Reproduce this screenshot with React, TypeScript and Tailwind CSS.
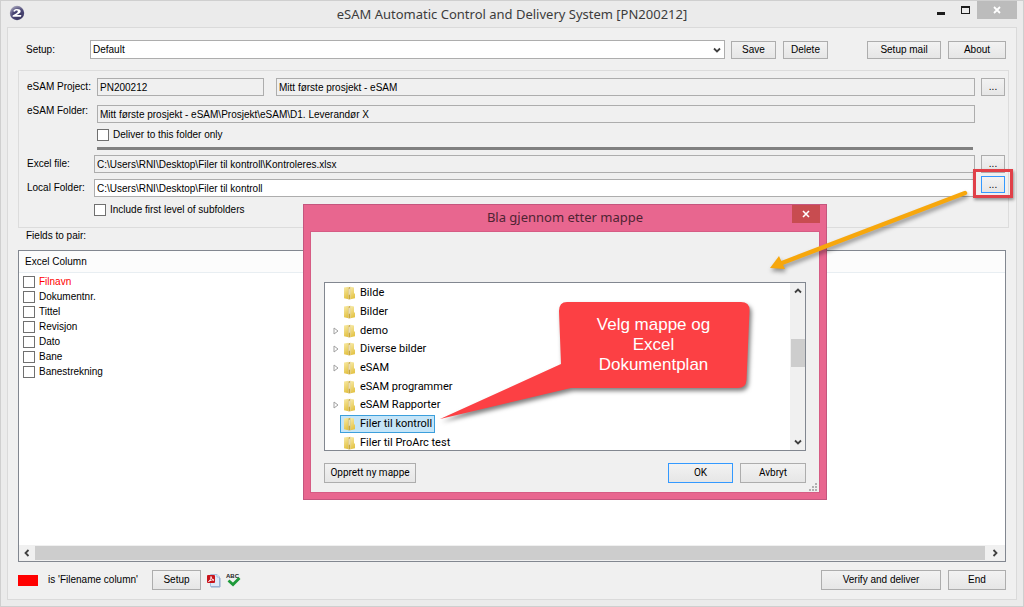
import React from 'react';
import clsx from 'clsx';

const excelColumns = [
  { name: 'Filnavn', isFilename: true },
  { name: 'Dokumentnr.' },
  { name: 'Tittel' },
  { name: 'Revisjon' },
  { name: 'Dato' },
  { name: 'Bane' },
  { name: 'Banestrekning' },
];

const folders = [
  { name: 'Bilde' },
  { name: 'Bilder' },
  { name: 'demo', expandable: true },
  { name: 'Diverse bilder', expandable: true },
  { name: 'eSAM', expandable: true },
  { name: 'eSAM programmer' },
  { name: 'eSAM Rapporter', expandable: true },
  { name: 'Filer til kontroll', selected: true },
  { name: 'Filer til ProArc test' },
];

type ButtonProps = React.ButtonHTMLAttributes<HTMLButtonElement>;

function Button({ className, ...props }: ButtonProps) {
  return (
    <button
      type="button"
      className={clsx(
        'shrink-0 border bg-linear-to-b from-[#f2f2f2] to-[#e6e6e6] text-center whitespace-nowrap',
        className
      )}
      {...props}
    />
  );
}

function BrowseButton({ className, ...props }: ButtonProps) {
  return (
    <Button className={clsx('w-6 leading-4', className)} {...props}>
      ...
    </Button>
  );
}

interface TextFieldProps {
  id: string;
  value: string;
  label?: string;
  className?: string;
}

function TextField({ id, value, label, className }: TextFieldProps) {
  return (
    <input
      id={id}
      type="text"
      aria-label={label}
      defaultValue={value}
      className={clsx('h-[18px] min-w-0 border border-[#adadad] px-0.5 outline-none', className)}
    />
  );
}

function CheckBox({ id, label, className }: { id: string; label: string; className?: string }) {
  return (
    <div className={clsx('flex items-center', className)}>
      <input
        id={id}
        type="checkbox"
        className="size-3 shrink-0 appearance-none border border-[#707070] bg-white"
      />
      <label htmlFor={id} className="whitespace-nowrap pl-1">
        {label}
      </label>
    </div>
  );
}

function Chevron({ d }: { d: string }) {
  return (
    <svg viewBox="0 0 8 8" className="size-2" fill="none" stroke="#404040" strokeWidth="1.8">
      <path d={d} />
    </svg>
  );
}

const chevronUp = 'M1 5.5 4 2.5 7 5.5';
const chevronDown = 'M1 2.5 4 5.5 7 2.5';
const chevronLeft = 'M5.5 1 2.5 4 5.5 7';
const chevronRight = 'M2.5 1 5.5 4 2.5 7';

function AppLogo() {
  return (
    <svg viewBox="0 0 16 16" className="size-4">
      <defs>
        <radialGradient id="logo-fill" cx="0.65" cy="0.75" r="0.8">
          <stop offset="0" stopColor="#3a3660" />
          <stop offset="0.6" stopColor="#4a4674" />
          <stop offset="1" stopColor="#a9a7bd" />
        </radialGradient>
      </defs>
      <circle cx="8" cy="8" r="7.2" fill="url(#logo-fill)" />
      <path
        d="M4.2 6.3C4.8 4.6 6.3 4 8.2 4c2.1 0 3.5.8 3.5 2.2 0 1.700-2.100 2.500-4.200 3.900h4.900l-.5 1.600H3.600v-1.200c2.300-1.700 5.200-2.600 5.200-4.100 0-.6-.5-.9-1.200-.9-.9 0-1.400.4-1.600 1.200z"
        fill="#fff"
      />
    </svg>
  );
}

function FolderIcon() {
  return (
    <svg viewBox="0 0 13 14" className="h-3.5 w-[13px] shrink-0">
      <defs>
        <linearGradient id="folder-fill" x1="0" y1="0" x2="0.3" y2="1">
          <stop offset="0" stopColor="#f8eba8" />
          <stop offset="1" stopColor="#e4c449" />
        </linearGradient>
      </defs>
      <path d="M1 1.500 5.500.8V13.200L1 12.300z" fill="url(#folder-fill)" />
      <path d="M5.500 1.500 7.500.8v12.400l-2 .3z" fill="#c9a840" />
      <path d="M5.800 3 6.800 2.600v6l-1 .4z" fill="#f2ead0" />
      <path d="M7.500.8 11 1.500V7l1 1v4.300l-4.500 1z" fill="url(#folder-fill)" />
    </svg>
  );
}

function PdfIcon() {
  return (
    <svg viewBox="0 0 14 16" className="h-4 w-3.5">
      <path d="M3.500 2.500H10l2.500 2.500v9.500h-9z" fill="#dce8f8" stroke="#a5bcdc" />
      <path d="M10 2.500V5h2.500" fill="#fff" stroke="#a5bcdc" />
      <path d="M4 15h9V6" fill="none" stroke="#8fa8cc" />
      <rect x="0" y="3" width="8" height="8" rx="1" fill="#c8141c" />
      <path
        d="M1.500 9.500C3 8.800 4.300 6.500 4 4.500c.2 2 1.400 3.300 3 3.600-1.800-.3-3.600.2-5.500 1.400z"
        fill="none"
        stroke="#fff"
        strokeWidth=".9"
      />
    </svg>
  );
}

function SpellCheckIcon() {
  return (
    <svg viewBox="0 0 14 14" className="h-3.5 w-3.5 overflow-visible">
      <text
        x="-1"
        y="5"
        fontFamily="Liberation Sans, sans-serif"
        fontSize="6"
        fontWeight="bold"
        fill="#222"
      >
        ABC
      </text>
      <path d="M1.500 7.500 6 11.500 12.500 5" fill="none" stroke="#1e9a3a" strokeWidth="2.800" />
    </svg>
  );
}

function TitleBar() {
  return (
    <header className="flex h-[26px] items-start pl-0.5">
      <div className="w-[86px] pt-1">
        <AppLogo />
      </div>
      <h1 className="flex-1 pt-1 text-center font-['Noto_Sans'] text-[13px] leading-[18px] text-[#3c3c3c]">
        eSAM Automatic Control and Delivery System [PN200212]
      </h1>
      <div className="flex h-[18px]">
        <button type="button" aria-label="Minimize" className="flex w-6 items-end justify-center pb-1">
          <span className="h-[3px] w-2 bg-[#1c1c1c]" />
        </button>
        <button type="button" aria-label="Maximize" className="flex w-6 items-center justify-center">
          <span className="h-2 w-[9px] border border-t-2 border-[#1c1c1c]" />
        </button>
        <button
          type="button"
          aria-label="Close"
          className="flex w-10 items-center justify-center bg-[#bcbcbc]"
        >
          <svg viewBox="0 0 8 8" className="size-2" stroke="#fff" strokeWidth="1.8">
            <path d="M1 1l6 6M7 1 1 7" />
          </svg>
        </button>
      </div>
    </header>
  );
}

function SetupRow() {
  return (
    <div className="flex items-center pr-[3px] pl-2">
      <label htmlFor="setup" className="w-16 shrink-0">
        Setup:
      </label>
      <div className="grid h-[19px] min-w-0 flex-1 items-center">
        <select
          id="setup"
          className="col-start-1 row-start-1 h-[19px] w-full appearance-none border border-[#adadad] bg-white px-0.5 outline-none"
        >
          <option>Default</option>
        </select>
        <span className="pointer-events-none col-start-1 row-start-1 justify-self-end pr-1">
          <Chevron d={chevronDown} />
        </span>
      </div>
      <Button className="ml-1.5 h-[18px] w-[45px] border-[#adadad]">Save</Button>
      <Button className="ml-[7px] h-[18px] w-[45px] border-[#adadad]">Delete</Button>
      <Button className="ml-[39px] h-[18px] w-[74px] border-[#adadad]">Setup mail</Button>
      <Button className="ml-[7px] h-[18px] w-[58px] border-[#adadad]">About</Button>
    </div>
  );
}

function ProjectBox() {
  return (
    <section className="mt-[11px] border border-[#dcdcdc] pt-[7px] pr-[3px] pb-[11px] pl-2">
      <div className="flex items-center">
        <label htmlFor="project" className="w-[70px] shrink-0 whitespace-nowrap">
          eSAM Project:
        </label>
        <TextField id="project" value="PN200212" className="w-[167px]" />
        <TextField
          id="project-name"
          label="Project name"
          value="Mitt første prosjekt - eSAM"
          className="ml-3 flex-1"
        />
        <BrowseButton aria-label="Browse projects" className="ml-1.5 h-[18px] border-[#adadad]" />
      </div>

      <div className="mt-[9px] flex items-start pr-[30px]">
        <label htmlFor="esam-folder" className="w-[70px] shrink-0 leading-3 whitespace-nowrap">
          eSAM Folder:
        </label>
        <TextField
          id="esam-folder"
          value="Mitt første prosjekt - eSAM\Prosjekt\eSAM\D1. Leverandør X"
          className="flex-1"
        />
      </div>

      <CheckBox
        id="deliver-only"
        label="Deliver to this folder only"
        className="mt-[5px] h-[13px] pl-[70px]"
      />
      <div className="mt-1.5 mr-8 ml-[70px] h-[3px] bg-[#808080]" />

      <div className="mt-[5px] flex items-center">
        <label htmlFor="excel-file" className="w-[67px] shrink-0">
          Excel file:
        </label>
        <TextField
          id="excel-file"
          value="C:\Users\RNI\Desktop\Filer til kontroll\Kontroleres.xlsx"
          className="flex-1"
        />
        <BrowseButton aria-label="Browse Excel file" className="ml-1.5 h-[18px] border-[#adadad]" />
      </div>

      <div className="mt-1.5 flex items-center">
        <label htmlFor="local-folder" className="w-[67px] shrink-0 whitespace-nowrap">
          Local Folder:
        </label>
        <TextField
          id="local-folder"
          value="C:\Users\RNI\Desktop\Filer til kontroll"
          className="flex-1 bg-white"
        />
        <div className="relative ml-1.5 flex h-[18px] items-start">
          <BrowseButton
            aria-label="Browse local folder"
            className="-mt-[3px] h-[17px] border-[#3399ff]"
          />
          <span className="pointer-events-none absolute -inset-x-2 -top-2.5 -bottom-px border-3 border-[#e04048] shadow-[1px_2px_3px_rgba(0,0,0,0.4)]" />
        </div>
      </div>

      <CheckBox
        id="subfolders"
        label="Include first level of subfolders"
        className="mt-1.5 h-[13px] pl-[67px]"
      />
    </section>
  );
}

function ColumnList() {
  return (
    <section className="mr-[3px] flex flex-1 flex-col border border-[#828790] bg-white">
      <h2 className="h-[22px] border-b border-[#e8eef2] bg-[#fcfcfc] pl-1.5 leading-[22px]">
        Excel Column
      </h2>
      <ul className="flex-1 pt-px pl-1">
        {excelColumns.map((column) => (
          <li key={column.name} className={clsx(column.isFilename && 'text-[#ff0000]')}>
            <CheckBox id={`column-${column.name}`} label={column.name} className="h-[15px]" />
          </li>
        ))}
      </ul>
      <div className="flex h-4 items-center bg-[#f0f0f0]">
        <span className="flex w-4 justify-center">
          <Chevron d={chevronLeft} />
        </span>
        <span className="h-3.5 flex-1 bg-[#cdcdcd]" />
        <span className="flex w-5 justify-center">
          <Chevron d={chevronRight} />
        </span>
      </div>
    </section>
  );
}

function Footer() {
  return (
    <footer className="mt-2 flex items-center pr-[3px]">
      <span className="h-[11px] w-5 bg-[#ff0000]" />
      <span className="w-[114px] pl-2.5 whitespace-nowrap">is 'Filename column'</span>
      <Button className="h-5 w-[49px] border-[#adadad]">Setup</Button>
      <button type="button" aria-label="PDF" className="ml-1.5">
        <PdfIcon />
      </button>
      <button type="button" aria-label="Spell check" className="ml-1.5">
        <SpellCheckIcon />
      </button>
      <Button className="ml-auto h-5 w-[120px] border-[#adadad]">Verify and deliver</Button>
      <Button className="ml-[7px] h-5 w-[58px] border-[#adadad]">End</Button>
    </footer>
  );
}

function FolderTree() {
  return (
    <div className="flex h-[169px] border border-[#828790] bg-white">
      <ul className="-mb-0.5 flex flex-1 flex-col pt-px text-[11px]">
        {folders.map((folder) => (
          <li key={folder.name} className="flex flex-1 items-center pl-2">
            <span className="w-[7px]">
              {folder.expandable && (
                <svg viewBox="0 0 6 8" className="h-2 w-1.5" fill="#fff" stroke="#a0a0a0">
                  <path d="M1 1v6l4-3z" />
                </svg>
              )}
            </span>
            <span
              className={clsx(
                'flex h-full items-center gap-1 border px-0.5 whitespace-nowrap',
                folder.selected ? 'border-[#3c9fdc] bg-[#c5e5f8]' : 'border-transparent'
              )}
            >
              <FolderIcon />
              {folder.name}
            </span>
          </li>
        ))}
      </ul>
      <div className="flex w-[15px] flex-col items-center bg-[#f0f0f0] py-1">
        <Chevron d={chevronUp} />
        <span className="mt-11 h-7 w-3.5 bg-[#cdcdcd]" />
        <span className="mt-auto">
          <Chevron d={chevronDown} />
        </span>
      </div>
    </div>
  );
}

function FolderDialog() {
  return (
    <div
      role="dialog"
      aria-labelledby="dialog-title"
      className="absolute top-[203px] left-[302px] w-[524px] border border-[#c4567e] bg-[#e8668f] px-1.5 pb-1.5 font-[Roboto] text-[10px] text-black"
    >
      <div className="flex h-[26px] items-start">
        <h2
          id="dialog-title"
          className="flex-1 pl-7 text-center font-['Noto_Sans'] text-[13px] leading-[25px] text-[#4e2433]"
        >
          Bla gjennom etter mappe
        </h2>
        <button
          type="button"
          aria-label="Close"
          className="flex h-[18px] w-7 items-center justify-center bg-[#c84c50]"
        >
          <svg viewBox="0 0 8 8" className="size-2" stroke="#fff" strokeWidth="1.6">
            <path d="M1 1l6 6M7 1 1 7" />
          </svg>
        </button>
      </div>
      <div className="border border-[#d65c84] bg-[#f0f0f0] px-[13px] pt-[50px]">
        <FolderTree />
        <div className="mt-3 flex">
          <Button className="h-5 w-[92px] border-[#adadad]">Opprett ny mappe</Button>
          <Button className="ml-auto h-5 w-[65px] border-[#3399ff]">OK</Button>
          <Button className="ml-[7px] h-5 w-[66px] border-[#adadad]">Avbryt</Button>
        </div>
        <div className="-mr-3 flex h-[9px] justify-end">
          <svg viewBox="0 0 9 9" className="size-[9px]" fill="#b0b0b0">
            <path d="M6 0h2v2H6zM3 3h2v2H3zM6 3h2v2H6zM0 6h2v2H0zM3 6h2v2H3zM6 6h2v2H6z" />
          </svg>
        </div>
      </div>
    </div>
  );
}

function Annotations() {
  return (
    <>
      <svg
        viewBox="0 0 220 100"
        className="pointer-events-none absolute top-[179px] left-[759px] h-[100px] w-[220px] drop-shadow-[1px_3px_2px_rgba(0,0,0,0.4)]"
      >
        <path d="M205 13 22 83" stroke="#f7a70c" strokeWidth="4.500" strokeLinecap="round" />
        <path d="M10 88 19 76 25 89z" fill="#f7a70c" />
      </svg>
      <div className="pointer-events-none absolute top-[295px] left-[433px] grid w-[324px]">
        <svg
          viewBox="0 0 324 134"
          className="col-start-1 row-start-1 h-[134px] w-[324px] drop-shadow-[2px_3px_2px_rgba(0,0,0,0.5)]"
        >
          <path
            d="M133 6H307Q316 6 315.500 15L312.500 84Q312 92 304 92H137L6 123 127 68 125 15Q125 6 133 6Z"
            fill="#fc4044"
          />
        </svg>
        <p className="z-10 col-start-1 row-start-1 pt-[19px] pl-[115px] text-center font-['Liberation_Sans'] text-[17px] leading-5 text-white">
          Velg mappe og
          <br />
          Excel
          <br />
          Dokumentplan
        </p>
      </div>
    </>
  );
}

export default function App() {
  return (
    <div className="relative flex min-h-screen flex-col border border-[#cfcfcf] bg-[#ebebeb] px-1.5 pb-1.5 font-['Liberation_Sans',sans-serif] text-[10px] leading-4 text-black">
      <TitleBar />
      <main className="flex flex-1 flex-col border border-[#dadada] bg-[#f0f0f0] pt-3 pr-[7px] pb-[9px] pl-2.5">
        <SetupRow />
        <ProjectBox />
        <h2 className="mb-1.5 pl-2">Fields to pair:</h2>
        <ColumnList />
        <Footer />
      </main>
      <FolderDialog />
      <Annotations />
    </div>
  );
}
